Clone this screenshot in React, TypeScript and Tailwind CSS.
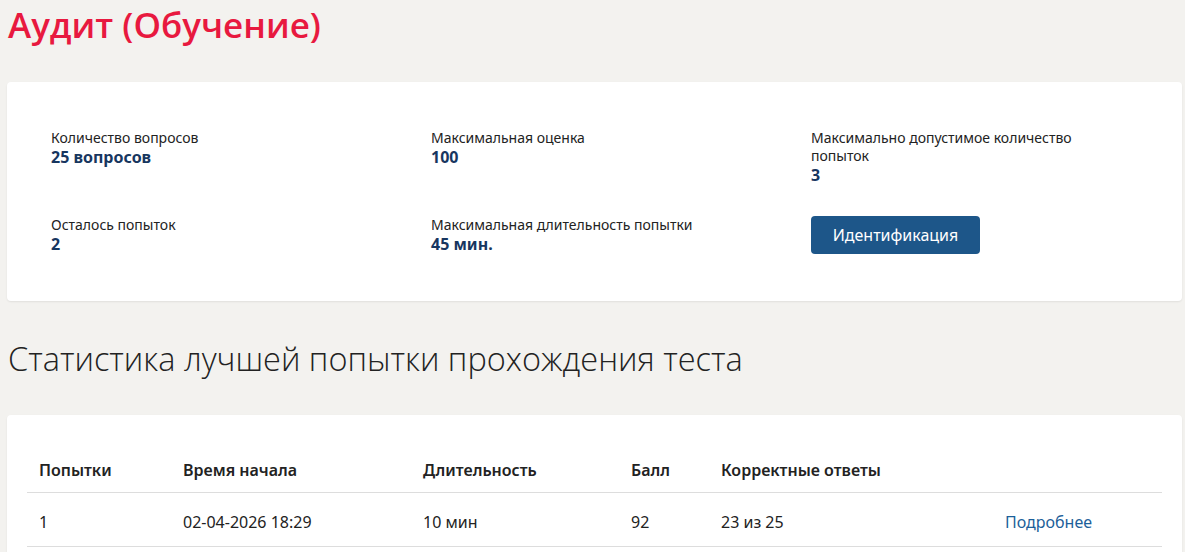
import React from 'react';

const InfoItem: React.FC<{ label: string; value: string }> = ({ label, value }) => (
    <div className="flex flex-col">
        <span className="text-[14px] leading-[18px] text-[#222]">{label}</span>
        <span className="text-[16px] leading-[20px] font-bold text-[#17365f]">{value}</span>
    </div>
);

export default function App() {
    return (
        <div className="min-h-[552px] bg-[#f3f2ef] pl-[7px] pr-[3px] pt-[2px] font-['Noto_Sans','Open_Sans',sans-serif] text-[#222]">
            <h1 className="pl-px text-[35px] leading-[46px] font-semibold text-[#e8193f] font-['Open_Sans',sans-serif]">Аудит (Обучение)</h1>

            <div className="mt-[34px] rounded bg-white px-[44px] pt-[47px] pb-[47px] shadow-[0_1px_2px_rgba(0,0,0,0.08)]">
                <div className="grid grid-cols-[380px_380px_1fr] gap-y-[31px]">
                    <InfoItem label="Количество вопросов" value="25 вопросов" />
                    <InfoItem label="Максимальная оценка" value="100" />
                    <div className="w-[280px]">
                        <InfoItem label="Максимально допустимое количество попыток" value="3" />
                    </div>
                    <InfoItem label="Осталось попыток" value="2" />
                    <InfoItem label="Максимальная длительность попытки" value="45 мин." />
                    <div>
                        <button className="h-[38px] w-[169px] rounded-[4px] bg-[#1d5689] text-[16px] text-white">Идентификация</button>
                    </div>
                </div>
            </div>

            <h2 className="mt-[38px] pl-px text-[32.5px] leading-[40px] font-light text-[#222] font-['Open_Sans',sans-serif]">Статистика лучшей попытки прохождения теста</h2>

            <div className="mt-[36px] rounded bg-white px-[20px] pt-[34px] pb-[20px] shadow-[0_1px_2px_rgba(0,0,0,0.08)]">
                <table className="w-full border-collapse text-left text-[16px]">
                    <thead>
                        <tr className="border-b border-[#dddddd]">
                            <th className="w-[144px] px-[12px] pt-[9px] pb-[10px] font-semibold">Попытки</th>
                            <th className="w-[240px] px-[12px] pt-[9px] pb-[10px] font-semibold">Время начала</th>
                            <th className="w-[208px] px-[12px] pt-[9px] pb-[10px] font-semibold">Длительность</th>
                            <th className="w-[90px] px-[12px] pt-[9px] pb-[10px] font-semibold">Балл</th>
                            <th className="w-[284px] px-[12px] pt-[9px] pb-[10px] font-semibold">Корректные ответы</th>
                            <th className="px-[12px] pt-[9px] pb-[10px]"></th>
                        </tr>
                    </thead>
                    <tbody>
                        <tr className="border-b border-[#dddddd]">
                            <td className="px-[12px] pt-[17px] pb-[12px]">1</td>
                            <td className="px-[12px] pt-[17px] pb-[12px]">02-04-2026 18:29</td>
                            <td className="px-[12px] pt-[17px] pb-[12px]">10 мин</td>
                            <td className="px-[12px] pt-[17px] pb-[12px]">92</td>
                            <td className="px-[12px] pt-[17px] pb-[12px]">23 из 25</td>
                            <td className="px-[12px] pt-[17px] pb-[12px]">
                                <a href="#" className="text-[#1d5f9a]">Подробнее</a>
                            </td>
                        </tr>
                    </tbody>
                </table>
            </div>
        </div>
    );
}
